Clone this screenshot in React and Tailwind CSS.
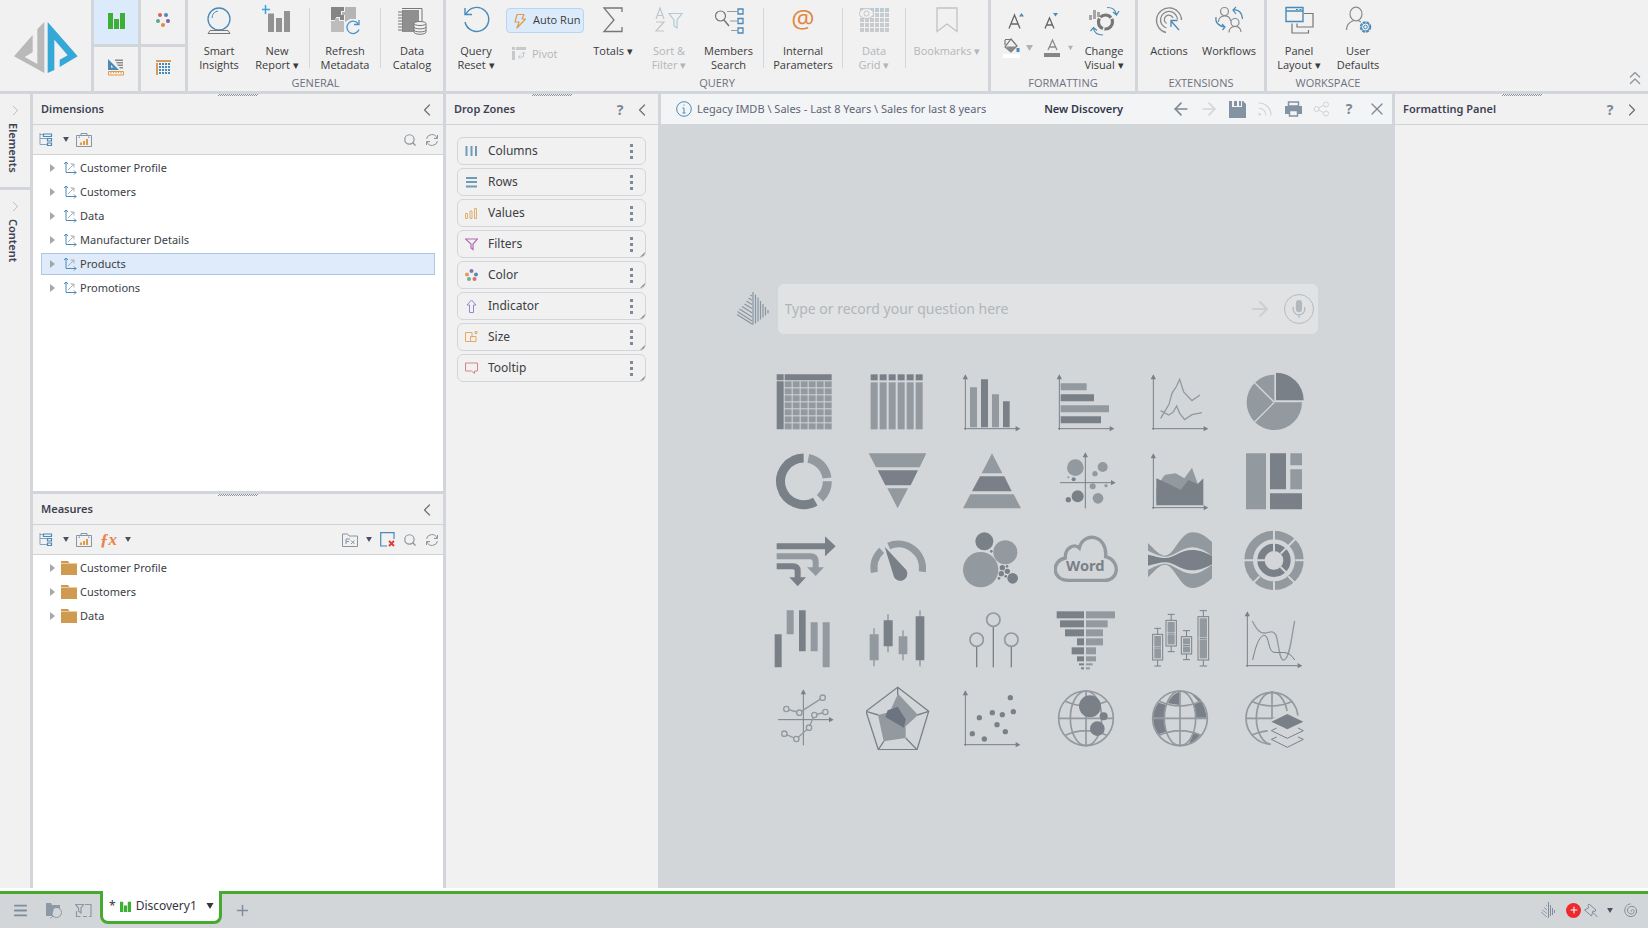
import { useState } from 'react';
import { Search, ChevronLeft, ChevronRight, ChevronsUp, X, ArrowLeft, ArrowRight, Rss, Plus, Menu, Mic } from 'lucide-react';

const DARK = '#7a8087';
const LIGHT = '#92999f';
const CANVAS = '#d2d6d9';
const BLUE = '#4a8ab8';
const ORANGE = '#e29a45';

/* ---------- Ribbon icons ---------- */

const Icon = ({ children, w = 30, h = 32, className = '' }) => (
  <svg width={w} height={h} viewBox={`0 0 ${w} ${h}`} fill="none" className={`shrink-0 ${className}`} aria-hidden="true">
    {children}
  </svg>
);

const Logo = () => (
  <svg width="64" height="54" viewBox="0 0 192 162" aria-hidden="true">
    <path fill="#b9b9b9" d="M91 9V162L0 112L56 48V100L32 114L70 135V30Z" />
    <path fill="#35a8d8" d="M101 9L191 112L137 144V122L161 109L121 62V153L101 162Z" />
  </svg>
);

const BarsIcon = ({ className = '' }) => (
  <svg width="17" height="17" viewBox="0 0 17 17" fill="#3fae36" className={className} aria-hidden="true">
    <path d="M0 1h5v16H0zM6 7h5v10H6zM12 1h5v16h-5z" />
  </svg>
);

const DotsIcon = ({ size = 14 }) => (
  <svg width={size} height={size} viewBox="0 0 14 14" aria-hidden="true">
    <circle cx="4" cy="2" r="2" fill="#d9605c" />
    <circle cx="10" cy="2" r="2" fill="#4a8ab8" />
    <circle cx="2" cy="8" r="2" fill="#4fae8c" />
    <circle cx="12" cy="8" r="2" fill="#8a5ba8" />
    <circle cx="7" cy="12" r="2" fill="#e08a42" />
  </svg>
);

const DesignIcon = () => (
  <Icon w={16} h={18}>
    <path d="M0 1l11 11H0z" fill={BLUE} />
    <path d="M3 7v2.500h2.500z" fill="#f1f1f1" />
    <path d="M7 1.500h8v1.500H7zM8 4h7v1.500H9zM9 6.500h6V8h-5zM11 9h4v1.500h-3z" fill="#8b8b8b" />
    <path d="M.5 13.500h15v3.500H.5zM3 13.500v2M5.500 13.500v1.500M8 13.500v2M10.500 13.500v1.500M13 13.500v2" stroke={ORANGE} />
  </Icon>
);

const GridIcon = () => (
  <Icon w={15} h={15}>
    <path d="M0 0h15v2H0zM0 3h2v12H0z" fill="#d69b5b" />
    {[3, 6, 9, 12].map((y) => (
      <path key={y} d={`M3 ${y}h2v2H3zM6 ${y}h2v2H6zM9 ${y}h2v2H9zM12 ${y}h2v2h-2z`} fill={BLUE} />
    ))}
  </Icon>
);

const InsightsIcon = () => (
  <Icon>
    <circle cx="15" cy="15" r="11" stroke={BLUE} strokeWidth="1.300" />
    <path d="M8 14a7.500 7.500 0 0 1 6-7" stroke={BLUE} />
    <path d="M6 26.500h18l2 3H4z" stroke="#777" />
  </Icon>
);

const NewReportIcon = () => (
  <Icon>
    <path d="M6 9.500h6V28H6zM14 14h6v14h-6zM22 7h6v21h-6z" fill="#929292" />
    <path d="M-1 5.500h9M3.500 1v9" stroke="#35a8d8" strokeWidth="1.500" />
  </Icon>
);

const RefreshMetaIcon = () => (
  <Icon>
    <path d="M1 3h13v4h-3v4h3v5h-4v-3H6v3H1z" fill="#858585" />
    <path d="M15 3h11v12h-6l-5 3v-7h-3V8h3z" fill="#b4b4b4" />
    <path d="M1 17h4v-3h4v3h5v11H1z" fill="#bdbdbd" />
    <path d="M28 19.500a6.200 6.200 0 1 0 1 6M29 16v4.500h-5" stroke="#4a93c9" strokeWidth="1.300" />
  </Icon>
);

const CatalogIcon = () => (
  <Icon>
    <path d="M5 4.500h20v14" stroke="#777" />
    <path d="M5 6h17v13h-5v9H5z" fill="#8f8f8f" />
    {[8, 11, 14, 17, 20, 23, 26].map((y) => <path key={y} d={`M1 ${y}h5`} stroke="#777" />)}
    <path d="M17 20v8c0 3 12 3 12 0v-8" fill="#f1f1f1" stroke="#777" />
    <ellipse cx="23" cy="19.500" rx="6" ry="2" fill="#f1f1f1" stroke="#777" />
    <path d="M17 23c0 2.500 12 2.500 12 0M17 26c0 2.500 12 2.500 12 0" stroke="#777" />
  </Icon>
);

const QueryResetIcon = () => (
  <Icon>
    <path d="M5 10A12 12 0 1 1 4 18M4 4v6.500h7" stroke={BLUE} strokeWidth="1.400" />
  </Icon>
);

const BoltIcon = () => (
  <Icon w={14} h={16}>
    <path d="M4 1.500h7L9 6h3.500L4 15l2-6H2z" stroke={ORANGE} strokeWidth="1.200" strokeLinejoin="round" />
  </Icon>
);

const PivotIcon = () => (
  <Icon w={14} h={14}>
    <path d="M0 0h3v3H0zM4 0h10v3H4zM0 4h3v9H0z" fill="#c6c9cb" />
    <path d="M11.500 5v5h-5M9.500 7l2-2 2 2M8.500 8l-2 2 2 2" stroke="#c6c9cb" />
  </Icon>
);

const SigmaIcon = () => (
  <Icon>
    <path d="M24 8V4H6l10 12L6 27.500h18V23" stroke="#777" strokeWidth="1.300" />
  </Icon>
);

const SortIcon = () => (
  <Icon>
    <path d="M2 15L6 4l4 11M3.500 11.500h5M2 18h8L2 27h8" stroke="#c3c6c8" strokeWidth="1.200" />
    <path d="M15 9.500h13l-5 6.500v8l-3-2v-6z" stroke="#b0cad8" strokeWidth="1.200" />
  </Icon>
);

const MembersIcon = () => (
  <Icon>
    <circle cx="6.500" cy="12" r="5" stroke="#777" strokeWidth="1.200" />
    <path d="M10 16l5 6" stroke="#777" strokeWidth="1.500" />
    <path d="M13 7.500h10M16 17h7M17 26.500h6" stroke="#999" />
    <path d="M24 5h5v5h-5zM24 14.500h5v5h-5zM24 24h5v5h-5z" stroke={BLUE} strokeWidth="1.300" />
  </Icon>
);

const DataGridIcon = () => (
  <Icon>
    {[4, 9, 14, 19, 24].map((y) => (
      <path key={y} d={`M1 ${y}h4v4H1zM6 ${y}h4v4H6zM11 ${y}h4v4h-4zM16 ${y}h4v4h-4zM21 ${y}h4v4h-4zM26 ${y}h4v4h-4z`} fill={y === 4 ? '#bccad3' : '#c8cbcd'} />
    ))}
    <ellipse cx="7.500" cy="9.500" rx="7" ry="5" fill="#f1f1f1" stroke="#c3c6c8" />
    <circle cx="7.500" cy="9.500" r="2.500" stroke="#c3c6c8" />
  </Icon>
);

const BookmarkIcon = () => (
  <Icon>
    <path d="M5 4h20v23.500L15 20 5 27.500z" stroke="#c0c3c5" strokeWidth="1.300" />
  </Icon>
);

const ChangeVisualIcon = () => (
  <Icon w={32}>
    <path d="M1 11h3v5H1zM5 6h3v9H5zM9 8h3v5H9z" fill="#a5a5a5" />
    <circle cx="17.500" cy="18" r="7" stroke="#777" strokeWidth="3.200" strokeDasharray="12 1.500" />
    <path d="M19 3.500c6 0 8 2 9.500 7M25 8l3.500 3L31 7" stroke={BLUE} strokeWidth="1.200" />
    <path d="M15 31c-6 0-9-3-9.500-7M2.500 27l3-3.500 3.500 3" stroke={BLUE} strokeWidth="1.200" />
  </Icon>
);

const ActionsIcon = () => (
  <Icon>
    <path d="M12 28.500A12.500 12.500 0 1 1 27.500 16M12.500 24A8.500 8.500 0 1 1 23.500 15.500M12.500 19.500A4.500 4.500 0 1 1 19 14" stroke="#8a8a8a" strokeWidth="1.300" />
    <path d="M25 26l-8-9M17 23v-6.500h6.500" stroke={BLUE} strokeWidth="1.300" />
  </Icon>
);

const WorkflowsIcon = () => (
  <Icon>
    <circle cx="10.500" cy="7.500" r="4" stroke="#8a8a8a" strokeWidth="1.200" />
    <path d="M4.500 18c0-8 12-8 12-1" stroke="#8a8a8a" strokeWidth="1.200" />
    <circle cx="21" cy="18.500" r="4" stroke="#8a8a8a" strokeWidth="1.200" />
    <path d="M15 28.500c0-8 12-8 12-.5" stroke="#8a8a8a" strokeWidth="1.200" />
    <path d="M19 6c5-1 9 2 9.500 9M22 3l-3 3 3 4M2 13c-1 5 2 9 9 10M8 20l3 3-2.500 3" stroke={BLUE} strokeWidth="1.200" />
  </Icon>
);

const LayoutIcon = () => (
  <Icon>
    <path d="M20 9.500h9v13.500H18M8 19.500v9.500h16.500v-3M13 19.500V23h5" stroke="#777" strokeWidth="1.200" />
    <path d="M2 3.500h17v14H2zM2 7h17" stroke={BLUE} strokeWidth="1.400" />
    <path d="M12 5.500h2M15.500 5.500h2" stroke={BLUE} />
  </Icon>
);

const UserDefaultsIcon = () => (
  <Icon>
    <ellipse cx="13" cy="10" rx="6" ry="6.800" stroke="#8a8a8a" strokeWidth="1.200" />
    <path d="M3.500 26c0-5 3-8 7-9.500M15 16.500l3 1.500" stroke="#8a8a8a" strokeWidth="1.200" />
    <circle cx="22.500" cy="23" r="5" stroke={BLUE} strokeWidth="1.500" strokeDasharray="3 1" />
    <circle cx="22.500" cy="23" r="4" stroke={BLUE} />
    <circle cx="22.500" cy="23" r="1.800" stroke={BLUE} />
  </Icon>
);

const FontSizeIcon = ({ down }) => (
  <Icon w={20} h={18}>
    {down ? (
      <path d="M3 16.500L7.500 6l4.500 10.500M4.500 13h6" stroke="#666" strokeWidth="1.300" />
    ) : (
      <path d="M2 16.500L7.500 3l5.500 13.500M4 12h7" stroke="#666" strokeWidth="1.300" />
    )}
    <path d={down ? 'M11 1h5l-2.500 3.500z' : 'M12 4.500h5L14.500 1z'} fill={BLUE} />
  </Icon>
);

const BucketIcon = () => (
  <Icon w={17} h={20}>
    <path d="M2 2v5M2 1.500h6M8 1l6 7-6 6-6-5z" stroke="#777" strokeWidth="1.200" />
    <path d="M3 8.500h10.500L8 14z" fill="#8a8a8a" />
    <path d="M15 10v4" stroke={BLUE} strokeWidth="3" />
    <path d="M0 16h17v4H0z" fill="#fff" />
  </Icon>
);

const FontColorIcon = () => (
  <Icon w={16} h={20}>
    <path d="M4 12L8.500 2 13 12M5.500 9h6" stroke="#8a8a8a" strokeWidth="1.300" />
    <path d="M0 15h16v4H0z" fill="#858585" />
  </Icon>
);

/* ---------- Ribbon ---------- */

const Tool = ({ icon, lines, className = '', disabled = false }) => (
  <button
    type="button"
    disabled={disabled}
    className={`flex flex-col items-center pt-1 text-[11px] leading-[14px] ${disabled ? 'text-[#b3b6b8]' : 'text-[#3b3b3b]'} ${className}`}
  >
    <span className="h-10">{icon}</span>
    {lines.map((l) => (
      <span key={l} className="whitespace-nowrap">{l}</span>
    ))}
  </button>
);

const Divider = () => <div className="mt-2 h-[60px] w-px bg-[#d5d8da]" />;

const Group = ({ title, children }) => (
  <section className="flex flex-col bg-[#f1f1f1]">
    <div className="flex h-[74px] items-start">{children}</div>
    <h2 className="text-center text-[11px] leading-[17px] text-[#6d7080]">{title}</h2>
  </section>
);

const Caret = ({ className = '' }) => (
  <svg width="7" height="6" viewBox="0 0 7 6" className={className} aria-hidden="true">
    <path d="M0 0h7L3.500 6z" fill="currentColor" />
  </svg>
);

const Ribbon = () => (
  <header className="flex shrink-0 gap-[3px] border-b-[3px] border-[#d2d5d9] bg-[#d2d5d9] font-['Open_Sans',sans-serif]">
    <div className="flex w-[91px] items-center justify-center bg-[#f1f1f1]">
      <Logo />
    </div>
    <nav className="grid w-[91px] grid-cols-2 grid-rows-2 gap-[3px]">
      <button type="button" aria-label="Discover" className="flex items-center justify-center bg-[#dcebfb] pb-1"><BarsIcon /></button>
      <button type="button" aria-label="Present" className="flex items-center justify-center bg-[#f1f1f1] pb-1"><DotsIcon /></button>
      <button type="button" aria-label="Model" className="flex items-center justify-center bg-[#f1f1f1] pb-1"><DesignIcon /></button>
      <button type="button" aria-label="Tabulate" className="flex items-center justify-center bg-[#f1f1f1] pb-1"><GridIcon /></button>
    </nav>

    <Group title="GENERAL">
      <Tool className="w-[62px]" icon={<InsightsIcon />} lines={['Smart', 'Insights']} />
      <Tool className="mr-[5px] w-[54px]" icon={<NewReportIcon />} lines={['New', 'Report ▾']} />
      <Divider />
      <Tool className="w-[70px]" icon={<RefreshMetaIcon />} lines={['Refresh', 'Metadata']} />
      <Divider />
      <Tool className="w-[62px]" icon={<CatalogIcon />} lines={['Data', 'Catalog']} />
    </Group>

    <Group title="QUERY">
      <Tool className="w-[60px]" icon={<QueryResetIcon />} lines={['Query', 'Reset ▾']} />
      <div className="flex w-[78px] flex-col gap-[9px] pt-2 text-[11px]">
        <button type="button" className="flex h-[25px] items-center gap-1.5 whitespace-nowrap rounded border border-[#b5d5f0] bg-[#dcebfb] pl-1.5 text-[#3b3b3b]">
          <BoltIcon />
          Auto Run
        </button>
        <button type="button" disabled className="flex h-6 items-center gap-1.5 pl-1.5 text-[#b3b6b8]">
          <PivotIcon />
          Pivot
        </button>
      </div>
      <Tool className="w-[58px]" icon={<SigmaIcon />} lines={['Totals ▾']} />
      <Tool className="w-[54px]" icon={<SortIcon />} lines={['Sort &', 'Filter ▾']} disabled />
      <Tool className="mr-0.5 w-[65px]" icon={<MembersIcon />} lines={['Members', 'Search']} />
      <Divider />
      <Tool
        className="w-[78px]"
        icon={<span className="block text-[26px] leading-[28px] text-[#e0873c]">@</span>}
        lines={['Internal', 'Parameters']}
      />
      <Divider />
      <Tool className="w-[62px]" icon={<DataGridIcon />} lines={['Data', 'Grid ▾']} disabled />
      <Divider />
      <Tool className="w-[82px]" icon={<BookmarkIcon />} lines={['Bookmarks ▾']} disabled />
    </Group>

    <Group title="FORMATTING">
      <div className="grid w-[82px] grid-cols-2 gap-y-2 pl-3 pt-3">
        <button type="button" aria-label="Increase font" className="pl-1"><FontSizeIcon /></button>
        <button type="button" aria-label="Decrease font" className="pl-1"><FontSizeIcon down /></button>
        <button type="button" aria-label="Fill color" className="flex items-center gap-1.5 text-[#b0b3b5]"><BucketIcon /><Caret /></button>
        <button type="button" aria-label="Font color" className="flex items-center gap-2 pl-1.5 text-[#b0b3b5]"><FontColorIcon /><Caret /></button>
      </div>
      <Tool className="w-[62px]" icon={<ChangeVisualIcon />} lines={['Change', 'Visual ▾']} />
    </Group>

    <Group title="EXTENSIONS">
      <Tool className="w-[62px]" icon={<ActionsIcon />} lines={['Actions']} />
      <Tool className="mr-1.5 w-[58px]" icon={<WorkflowsIcon />} lines={['Workflows']} />
    </Group>

    <div className="flex flex-1 justify-between bg-[#f1f1f1]">
      <Group title="WORKSPACE">
        <Tool className="w-[64px]" icon={<LayoutIcon />} lines={['Panel', 'Layout ▾']} />
        <Tool className="mr-1 w-[54px]" icon={<UserDefaultsIcon />} lines={['User', 'Defaults']} />
      </Group>
      <button type="button" aria-label="Collapse ribbon" className="self-end pb-0.5 pr-0.5 text-[#8f98a0]">
        <ChevronsUp size={22} strokeWidth={1.5} />
      </button>
    </div>
  </header>
);

/* ---------- Side panels ---------- */

const Grip = () => (
  <div className="absolute left-1/2 top-0 h-[2px] w-10 -translate-x-1/2 bg-[repeating-conic-gradient(#8a93a0_0_25%,#f1f1f1_0_50%)] bg-[length:2px_2px]" />
);

const PanelHeader = ({ title, children }) => (
  <div className="relative flex h-[31px] shrink-0 items-center border-b border-[#cfd3d6] bg-[#f1f1f1] pl-2 pt-px">
    <Grip />
    <h3 className="text-[11px] font-semibold text-[#3f4254]">{title}</h3>
    <div className="ml-auto flex items-center text-[#6b7580]">{children}</div>
  </div>
);

const CollapseButton = () => (
  <button type="button" aria-label="Collapse" className="pr-1.5"><ChevronLeft size={20} strokeWidth={1.5} /></button>
);

const HelpButton = () => (
  <button type="button" aria-label="Help" className="mr-0.5 w-5 text-sm font-bold text-[#7d8794]">?</button>
);

const HierarchyIcon = () => (
  <Icon w={14} h={14}>
    <path d="M1 0v11.500h7M1 5.500h7M1 1.500h3" stroke="#8aa5b8" />
    <path d="M4.500 1h8v2.500h-8zM8.500 5.500h4V8h-4zM8.500 10h4v2.500h-4z" stroke={BLUE} strokeWidth="1.200" />
  </Icon>
);

const KpiIcon = () => (
  <Icon w={16} h={14}>
    <path d="M.5 2.500h15v11H.5zM5 2.500v-2h6v2M3 5V4h1M13 5V4h-1" stroke="#8796a3" />
    <path d="M4 9.500h2V12H4zM7 8h2v4H7zM10 6h2v6h-2z" fill={ORANGE} />
  </Icon>
);

const SyncIcon = () => (
  <Icon w={14} h={14}>
    <path d="M1.500 6A5.500 5.500 0 0 1 12 5M12.500 8A5.500 5.500 0 0 1 2 9M12.500 2v3.500H9M1.500 12V8.500H5" stroke="#8b949c" />
  </Icon>
);

const FxFolderIcon = () => (
  <Icon w={16} h={14}>
    <path d="M.5 1h5l1.500 2h8.500v10.500H.5z" stroke="#8796a3" />
    <path d="M4 11V6h4M4 8.500h3M9 7.500l3.500 3.500M12.500 7.500L9 11" stroke="#8796a3" />
  </Icon>
);

const ClearIcon = () => (
  <Icon w={15} h={15}>
    <path d="M7 14H.7V.7h13.300V7" stroke={BLUE} strokeWidth="1.200" />
    <path d="M9 9l5 5M14 9l-5 5" stroke="#e23a35" strokeWidth="1.800" />
  </Icon>
);

const AxesIcon = () => (
  <Icon w={14} h={14}>
    <path d="M3 1v10.500H13M1 3l2-2 2 2M11 9.500l2 2-2 2" stroke={BLUE} />
    <path d="M5 9l6-6M7.500 3H11v3.500" stroke="#a9aeb2" />
  </Icon>
);

const FolderIcon = () => (
  <Icon w={16} h={14}>
    <path d="M0 0h7l1.500 2H0zM0 2.500h16V14H0z" fill="#d09a50" />
  </Icon>
);

const Toolbar = ({ measures }) => (
  <div className="flex h-[30px] shrink-0 items-center border-b border-[#cfd3d6] bg-[#f1f1f1] pl-1.5 pr-1 text-[#4a4f63]">
    <button type="button" aria-label="Tree view" className="flex w-[37px] items-center gap-[10px]"><HierarchyIcon /><Caret className="h-[5px] w-1.5" /></button>
    <button type="button" aria-label="KPI"><KpiIcon /></button>
    {measures && (
      <button type="button" aria-label="Add formula" className="ml-2 flex items-center gap-2">
        <span className="font-['Liberation_Serif',serif] text-[17px] font-bold italic leading-5 text-[#e8834a]">ƒx</span>
        <Caret className="h-[5px] w-1.5" />
      </button>
    )}
    <div className="ml-auto flex items-center gap-2">
      {measures && (
        <>
          <button type="button" aria-label="Formula folder" className="flex items-center gap-2"><FxFolderIcon /><Caret className="h-[5px] w-1.5" /></button>
          <button type="button" aria-label="Clear"><ClearIcon /></button>
        </>
      )}
      <button type="button" aria-label="Search"><Search size={14} strokeWidth={2} className="text-[#8b949c]" /></button>
      <button type="button" aria-label="Refresh"><SyncIcon /></button>
    </div>
  </div>
);

const Tree = ({ items, selected, onSelect, icon }) => (
  <ul className="flex-1 bg-white px-2 pt-0.5 text-[11px]">
    {items.map((item) => (
      <li key={item} className="pb-0.5">
        <button
          type="button"
          onClick={() => onSelect(item)}
          className={`flex h-[22px] w-full items-center border pl-2 text-[#3b3e44] ${selected === item ? 'border-[#a9c9e2] bg-[#dfebfa]' : 'border-transparent'}`}
        >
          <svg width="5" height="8" viewBox="0 0 5 8" aria-hidden="true"><path d="M0 0l5 4-5 4z" fill="#a3a7aa" /></svg>
          <span className="ml-1.5 mr-[3px] flex w-4 justify-end">{icon}</span>
          {item}
        </button>
      </li>
    ))}
  </ul>
);

const RailTab = ({ label, className = '' }) => (
  <button type="button" className={`flex flex-col items-center bg-[#f1f1f1] pt-2 text-[11px] font-semibold text-[#3f4254] ${className}`}>
    <ChevronRight size={17} strokeWidth={1} className="text-[#a0a6ab]" />
    <span className="mt-1 pr-1 leading-4 [writing-mode:vertical-rl]">{label}</span>
  </button>
);

/* ---------- Drop zones ---------- */

const zones = [
  { name: 'Columns', icon: <path d="M1.500 1v10M6.500 1v10M11 1v10" stroke="#6f9ab8" strokeWidth="2" /> },
  { name: 'Rows', icon: <path d="M1 2h11M1 6h11M1 10.500h11" stroke="#6f9ab8" strokeWidth="2" /> },
  { name: 'Values', icon: <path d="M.5 6.500h2v5h-2zM5 4h2v7.500H5zM9.500 1.500h2v10h-2z" stroke="#e0b06a" /> },
  { name: 'Filters', icon: <path d="M.5 1h12L8 6v5.500l-2-1.500V6z" stroke="#b06cb5" strokeWidth="1.200" />, more: true },
  {
    name: 'Color',
    icon: (
      <>
        <circle cx="6.500" cy="2" r="2" fill="#8a6fae" />
        <circle cx="2" cy="5.500" r="2" fill="#e09a62" />
        <circle cx="11" cy="5.500" r="2" fill="#5b86b5" />
        <circle cx="4" cy="10" r="2" fill="#6fae9a" />
        <circle cx="9.500" cy="10" r="2" fill="#d9706c" />
      </>
    ),
    more: true,
  },
  { name: 'Indicator', icon: <path d="M6.500 0L11 5H8.500v7.500h-4V5H2z" stroke="#9a86cc" />, more: true },
  { name: 'Size', icon: <path d="M7 10.500H.5v-9H7v5M5.500 5.500H11v5H5.500zM10 .5h2v2h-2z" stroke="#e5a868" />, more: true },
  { name: 'Tooltip', icon: <path d="M.5 1h12v8H9.500v2.500L6.500 9h-6z" stroke="#d6848a" />, more: true },
];

const DropZone = ({ name, icon, more }) => (
  <button type="button" className="relative flex h-7 w-full items-center overflow-hidden rounded-md border border-[#d2d5d9] pl-[7px] pr-3 text-xs text-[#3b3e44]">
    <Icon w={13} h={13}>{icon}</Icon>
    <span className="ml-[10px]">{name}</span>
    <svg width="3" height="15" viewBox="0 0 3 15" fill="#7f8a96" className="ml-auto" aria-hidden="true">
      <path d="M0 0h3v3H0zM0 6h3v3H0zM0 12h3v3H0z" />
    </svg>
    {more && (
      <svg width="5" height="5" viewBox="0 0 5 5" className="absolute bottom-0 right-0" aria-hidden="true">
        <path d="M5 0v5H0z" fill="#858c93" />
      </svg>
    )}
  </button>
);

/* ---------- Chart gallery ---------- */

// chart drawings use a 192 unit box
const Axis = () => (
  <g fill={DARK}>
    <path d="M16 24V180M12 176H170" stroke={DARK} strokeWidth="3" fill="none" />
    <path d="M8 28L16 13L24 28ZM167 168L181 176L167 184Z" />
  </g>
);

const CrossAxis = () => (
  <g fill={DARK}>
    <path d="M94 18V178M18 101H176" stroke={DARK} strokeWidth="3" fill="none" />
    <path d="M86 25L94 10L102 25ZM171 93L185 101L171 109Z" />
  </g>
);

const Circles = ({ data, ...rest }) => data.map(([x, y, r]) => <circle key={`${x}-${y}`} cx={x} cy={y} r={r} {...rest} />);

const Globe = ({ cx = 96, r = 82 }) => (
  <g fill="none" stroke={LIGHT} strokeWidth="5">
    <circle cx={cx} cy="97" r={r} />
    <ellipse cx={cx} cy="97" rx="47" ry={r} />
    <path d={`M${cx} 15V179M${cx - r} 97H${cx + r}M${cx - 62} 46Q${cx} 74 ${cx + 62} 46M${cx - 62} 148Q${cx} 120 ${cx + 62} 148`} />
  </g>
);

const boxPlots = [
  [14, 82, 30, 77, 64, 177],
  [54, 40, 31, 77, 22, 134],
  [100, 89, 31, 52, 71, 158],
  [150, 29, 32, 130, 11, 177],
];

const tornado = [
  [13, 21, 8, 183],
  [40, 21, 18, 161],
  [67, 21, 33, 147],
  [94, 21, 69, 147],
  [121, 21, 53, 126],
  [148, 15, 69, 126],
  [169, 6, 75, 116],
  [181, 6, 81, 108],
];

const six = [0, 1, 2, 3, 4, 5];

const charts = [
  { name: 'Matrix', art: (
    <>
      <path fill={DARK} d="M14 13H35V31H14ZM38 13H179V31H38ZM14 34H35V178H14Z" />
      {six.map((c) => [...six, 6].map((r) => (
        <rect key={`${c}${r}`} x={38 + c * 24} y={34 + r * 21} width="21" height="18" fill={LIGHT} />
      )))}
    </>
  ) },
  { name: 'Table', art: six.map((c) => (
    <g key={c}>
      <rect x={14 + c * 27} y="13" width="21" height="18" fill={DARK} />
      <rect x={14 + c * 27} y="37" width="21" height="141" fill={LIGHT} />
    </g>
  )) },
  { name: 'Column', art: (
    <>
      <Axis />
      <path fill={LIGHT} d="M30 52H51V172H30ZM96 73H117V172H96Z" />
      <path fill={DARK} d="M63 28H84V172H63ZM129 94H149V172H129Z" />
    </>
  ) },
  { name: 'Bar', art: (
    <>
      <Axis />
      <path fill={LIGHT} d="M20 40H98V61H20ZM20 106H165V127H20Z" />
      <path fill={DARK} d="M20 73H120V94H20ZM20 139H141V160H20Z" />
    </>
  ) },
  { name: 'Line', art: (
    <>
      <Axis />
      <path fill="none" stroke={LIGHT} strokeWidth="4" d="M38 145L63 103L72 70L86 48L95 28L107 66L132 92L156 75M38 122L62 135L75 127L86 108L95 130L110 149L132 134L162 128" />
    </>
  ) },
  { name: 'Pie', art: (
    <>
      <path fill={LIGHT} d="M97 14A83 83 0 1 0 180 97H97Z" />
      <path fill={DARK} d="M102 8A83 83 0 0 1 185 91H102Z" />
      <path stroke={CANVAS} strokeWidth="4" d="M97 97L38 38M97 97L38 156" />
    </>
  ) },
  { name: 'Doughnut', art: (
    <g fill="none" strokeWidth="27">
      <path stroke={DARK} d="M95 27A70 70 0 1 0 130 158" />
      <path stroke={LIGHT} d="M109 28A70 70 0 0 1 165 87M166 97A70 70 0 0 1 144 148" />
    </g>
  ) },
  { name: 'Funnel', art: (
    <>
      <path fill={LIGHT} d="M8 13H181L161 55H30ZM64 118H126L95 178Z" />
      <path fill={DARK} d="M35 64H156L134 109H58Z" />
    </>
  ) },
  { name: 'Pyramid', art: (
    <>
      <path fill={LIGHT} d="M96 13L127 73H65ZM31 136H161L183 178H9Z" />
      <path fill={DARK} d="M60 82H133L155 127H36Z" />
    </>
  ) },
  { name: 'Bubble', art: (
    <>
      <CrossAxis />
      <Circles fill={LIGHT} data={[[64, 56, 25], [146, 54, 15], [123, 74, 8], [43, 85, 3], [116, 112, 9], [156, 110, 5], [132, 148, 16]]} />
      <Circles fill={DARK} data={[[59, 91, 6], [71, 142, 18], [43, 152, 8]]} />
    </>
  ) },
  { name: 'Area', art: (
    <>
      <Axis />
      <path fill={LIGHT} d="M25 119L45 84L52 77L83 73L109 88L132 56L149 104V160H25Z" />
      <path fill={DARK} d="M25 88L63 105L98 123L121 93L149 105L166 88V169H25Z" />
    </>
  ) },
  { name: 'Treemap', art: (
    <>
      <path fill={LIGHT} d="M12 13H72V181H12ZM145 13H180V49H145ZM145 61H180V121H145Z" />
      <path fill={DARK} d="M84 13H132V121H84ZM84 133H180V181H84Z" />
    </>
  ) },
  { name: 'Sankey', art: (
    <>
      <path fill="none" stroke={LIGHT} strokeWidth="18" d="M14 85H115Q131 85 131 101V120" />
      <path fill={LIGHT} d="M105 118H156L131 144Z" />
      <path fill="none" stroke={DARK} strokeWidth="18" d="M14 55H162M14 115H63Q77 115 77 129V150" />
      <path fill={DARK} d="M159 25L191 55L159 85ZM52 148H102L77 175Z" />
    </>
  ) },
  { name: 'Gauge', art: (
    <>
      <path fill="none" stroke={LIGHT} strokeWidth="21" d="M25 133A73 73 0 0 1 47 67M68 54A73 73 0 0 1 169 131" />
      <path fill={DARK} d="M56 56L121 126A20 20 0 0 1 84 147Z" />
      <circle cx="103" cy="138" r="20" fill={DARK} />
    </>
  ) },
  { name: 'Packed bubbles', art: (
    <>
      <Circles fill={LIGHT} data={[[136, 73, 36], [62, 125, 53]]} />
      <Circles fill={DARK} data={[[73, 40, 27], [94, 70, 4], [127, 119, 8], [141, 115, 4], [124, 137, 8], [142, 130, 8], [117, 151, 4], [137, 145, 4], [158, 151, 16]]} />
    </>
  ) },
  { name: 'Word cloud', art: (
    <>
      <path fill="none" stroke={LIGHT} strokeWidth="10" d="M44 157C-8 157 -8 98 34 90C32 58 62 46 76 60C88 10 160 18 155 86C200 98 196 157 152 157Z" />
      <text x="94" y="129" textAnchor="middle" fontSize="44" fontWeight="700" fill={DARK}>Word</text>
    </>
  ) },
  { name: 'Stream', art: (
    <>
      <path fill={LIGHT} d="M0 45C20 65 35 83 51 83C80 83 95 13 133 13C160 13 175 28 192 42V84C170 66 150 58 133 58C100 58 75 88 51 86C35 84 20 78 0 68Z" />
      <path fill={LIGHT} d="M0 148C20 128 35 110 51 110C80 110 95 180 133 180C160 180 175 165 192 151V110C170 127 150 137 133 137C100 137 75 107 51 107C35 108 20 116 0 125Z" />
      <path fill={DARK} d="M0 80C20 84 35 90 51 90C80 90 95 66 133 66C155 66 175 74 192 84V109C175 119 155 127 133 127C95 127 80 103 51 103C35 103 20 109 0 113Z" />
    </>
  ) },
  { name: 'Sunburst', art: (
    <>
      <circle cx="96" cy="97" r="76" fill="none" stroke={LIGHT} strokeWidth="26" />
      <circle cx="96" cy="97" r="39" fill="none" stroke={DARK} strokeWidth="22" />
      <path stroke={CANVAS} strokeWidth="6" d="M96 0V69M96 160V192M0 97H69M160 97H192M116 77L134 59M139 54L166 27M116 117L134 135M139 145L166 172M53 145L26 172" />
    </>
  ) },
  { name: 'Waterfall', art: (
    <>
      <path fill={DARK} d="M8 82H29V181H8ZM81 10H101V133H81Z" />
      <path fill={LIGHT} d="M44 10H65V82H44ZM116 46H137V133H116ZM152 46H173V181H152Z" />
    </>
  ) },
  { name: 'Candlestick', art: (
    <>
      <path stroke={DARK} strokeWidth="3" d="M24 64V178M66 22V136M111 70V160M162 10V178" />
      <path fill={LIGHT} d="M11 82H38V160H11ZM98 88H124V142H98Z" />
      <path fill={DARK} d="M53 40H80V118H53ZM149 28H175V160H149Z" />
    </>
  ) },
  { name: 'Lollipop', art: (
    <>
      <path stroke={DARK} strokeWidth="4" d="M100 58V181M50 118V181M154 118V181" />
      <Circles fill="none" stroke={LIGHT} strokeWidth="5" data={[[100, 38, 20], [50, 98, 20], [154, 98, 20]]} />
    </>
  ) },
  { name: 'Tornado', art: tornado.map(([y, h, left, right]) => (
    <g key={y}>
      <rect x={left} y={y} width={90 - left} height={h} fill={DARK} />
      <rect x="96" y={y} width={right - 96} height={h} fill={LIGHT} />
    </g>
  )) },
  { name: 'Box plot', art: boxPlots.map(([x, y, w, h, top, bottom]) => (
    <g key={x} fill="none" stroke={DARK} strokeWidth="3">
      <path d={`M${x + w / 2} ${top}V${y}M${x + w / 2} ${y + h}V${bottom}M${x + 5} ${top}H${x + w - 5}M${x + 5} ${bottom}H${x + w - 5}`} />
      <rect x={x} y={y} width={w} height={h} />
      <rect x={x + 5} y={y + 5} width={w - 10} height={h - 10} fill={LIGHT} stroke="none" />
      <path d={`M${x + 2} ${y + h / 2}H${x + w - 2}`} stroke={CANVAS} strokeWidth="7" />
      <path d={`M${x + 5} ${y + h / 2}H${x + w - 5}`} />
    </g>
  )) },
  { name: 'Spline', art: (
    <>
      <Axis />
      <path fill="none" stroke={LIGHT} strokeWidth="4" d="M31 42C40 60 50 79 68 78C82 77 92 68 101 83C110 100 110 159 125 159C143 159 150 80 158 42" />
      <path fill="none" stroke={DARK} strokeWidth="3" d="M32 159C42 110 55 85 67 85C82 85 78 135 96 136C120 139 140 128 158 159" />
    </>
  ) },
  { name: 'Quadrant line', art: (
    <>
      <CrossAxis />
      <path fill="none" stroke={LIGHT} strokeWidth="4" d="M43 69L82 80L152 35M37 143L73 159L111 125L127 87L160 78" />
      <Circles fill={CANVAS} stroke={LIGHT} strokeWidth="4" data={[[43, 69, 8], [82, 80, 8], [152, 35, 8], [37, 143, 8], [73, 159, 8], [111, 125, 8], [127, 87, 8], [160, 78, 8]]} />
    </>
  ) },
  { name: 'Radar', art: (
    <>
      <path fill={LIGHT} d="M96 23L156 87L119 121V156L53 166L36 87L71 78Z" />
      <path fill="#6b7480" d="M65 73L95 62L119 100L114 125L58 93Z" />
      <path fill="none" stroke={DARK} strokeWidth="4" d="M95 4L188 76L153 191H37L0 76ZM95 4V26M188 76L154 87M153 191L119 156M37 191L54 165M0 76L37 87" />
    </>
  ) },
  { name: 'Scatter', art: (
    <>
      <Axis />
      <Circles fill={DARK} data={[[151, 35, 8], [160, 77, 8], [127, 86, 8], [97, 80, 8], [58, 95, 8], [111, 116, 8], [136, 137, 8], [37, 143, 8], [73, 159, 8]]} />
    </>
  ) },
  { name: 'Map bubbles', art: (
    <>
      <Globe />
      <Circles fill={DARK} data={[[108, 61, 33], [149, 91, 12], [130, 128, 22]]} />
    </>
  ) },
  { name: 'Filled map', art: (
    <>
      <path fill={DARK} d="M94 17V57L60 52Q68 27 94 17ZM32 50L55 57Q48 75 49 95H15Q16 70 32 50ZM128 22Q170 42 176 95H143Q142 72 135 56L154 49ZM49 99Q49 120 55 137L32 145Q16 124 15 99ZM135 137L157 145Q146 164 122 174Q133 155 135 137Z" />
      <Globe />
    </>
  ) },
  { name: 'Layered map', art: (
    <>
      <Globe cx={90} r={78} />
      <path fill={CANVAS} d="M136 74L192 100V192H90L76 130V107Z" />
      <path fill={DARK} d="M136 84L184 107L136 130L88 107Z" />
      <path fill="none" stroke={DARK} strokeWidth="3" d="M104 126L88 134L136 157L184 134L168 126M104 153L88 160L136 184L184 160L168 153" />
    </>
  ) },
];

const PyramidIcon = ({ size = 34 }) => (
  <svg width={size} height={size} viewBox="0 0 34 34" fill="none" stroke="#8a95a3" strokeWidth="1.200" aria-hidden="true">
    <path d="M17 0V33M19.500 2.500V31.500M22 5.500V29.500M24.500 9V27.500M27 12V25.500M29.500 15V23.500M32 18V21.500" />
    <path d="M14.500 3l1.500 1M12.500 6l3.500 2.300M10.500 9l5.500 3.600M8.500 12l7.500 4.600M6 14.500l10 6.300M3.500 17l12.500 8M1.500 19.500l14.500 9.500M1 22.500l15 9.500" />
  </svg>
);

// thinned out for small sizes
const SmallPyramidIcon = () => (
  <svg width="16" height="17" viewBox="0 0 16 17" fill="none" stroke="#7f8d9b" aria-hidden="true">
    <path d="M8.500 0v16M10.500 3v11M12.500 6v7M14.500 8v3" />
    <path d="M6 3l1 1M4 5.500l3 2.500M2.500 8L7 11.500M1 10l6 5" strokeWidth=".8" />
  </svg>
);

const SaveIcon = () => (
  <Icon w={17} h={17}>
    <path d="M0 0h3v6h10V0h1l3 3v14H0zM5 0h3v5H5zM10 0h2v5h-2z" fill="#8393a3" />
  </Icon>
);

const PrintIcon = () => (
  <Icon w={17} h={16}>
    <path d="M0 5h17v8H0z" fill="#8393a3" />
    <path d="M3.500 1h10v4h-10zM4.500 9.500h8V15h-8z" fill="#f3f4f5" stroke="#8393a3" strokeWidth="1.500" />
  </Icon>
);

const ShareIcon = () => (
  <Icon w={17} h={16}>
    <path d="M6 7l5-3M6 9l5 3" stroke="#cfd3d6" />
    <circle cx="3.500" cy="8" r="2.500" stroke="#cfd3d6" />
    <circle cx="13" cy="3.500" r="2.500" stroke="#cfd3d6" />
    <circle cx="13" cy="12.500" r="2.500" stroke="#cfd3d6" />
  </Icon>
);

const HeaderButton = ({ label, children }) => (
  <button type="button" aria-label={label} className="flex w-7 items-center justify-center">{children}</button>
);

const Canvas = () => (
  <main className="flex min-w-0 flex-1 flex-col bg-[#d2d6d9]">
    <div className="flex h-[31px] shrink-0 items-center border-b border-[#d2d6d9] bg-[#f3f4f5] pl-[15px] pr-px text-[#7d8794]">
      <svg width="16" height="16" viewBox="0 0 16 16" fill="none" stroke={BLUE} className="shrink-0" aria-hidden="true">
        <circle cx="8" cy="8" r="7.300" />
        <path d="M8 7v5M6.500 7H8M6.500 12h3M7.500 4h1" />
      </svg>
      <span className="ml-[5px] whitespace-nowrap text-[11px] text-[#5f6678]">Legacy IMDB \ Sales - Last 8 Years \ Sales for last 8 years</span>
      <h1 className="ml-auto mr-11 whitespace-nowrap pt-px text-[11px] font-semibold text-[#34374a]">New Discovery</h1>
      <div className="flex">
        <HeaderButton label="Back"><ArrowLeft size={20} strokeWidth={2} /></HeaderButton>
        <HeaderButton label="Forward"><ArrowRight size={20} strokeWidth={2} className="text-[#d3d6d9]" /></HeaderButton>
        <HeaderButton label="Save"><SaveIcon /></HeaderButton>
        <HeaderButton label="Subscribe"><Rss size={18} strokeWidth={1.5} className="text-[#d0d4d7]" /></HeaderButton>
        <HeaderButton label="Print"><PrintIcon /></HeaderButton>
        <HeaderButton label="Share"><ShareIcon /></HeaderButton>
        <HeaderButton label="Help"><span className="text-sm font-bold">?</span></HeaderButton>
        <HeaderButton label="Close"><X size={20} strokeWidth={1.5} /></HeaderButton>
      </div>
    </div>

    <div className="mx-auto flex w-[582px] max-w-full flex-col gap-7 pt-[159px]">
      <div className="flex items-center gap-2">
        <PyramidIcon />
        <label className="flex h-[50px] flex-1 items-center gap-3 rounded-md bg-[#e0e2e4] pl-[7px] pr-1">
          <input
            type="text"
            aria-label="Question"
            placeholder="Type or record your question here"
            className="min-w-0 flex-1 bg-transparent text-sm outline-none placeholder:text-[#b2b6b9]"
          />
          <button type="button" aria-label="Ask" className="text-[#cdd0d3]"><ArrowRight size={24} strokeWidth={2} /></button>
          <button type="button" aria-label="Record" className="flex size-[30px] items-center justify-center rounded-full border border-[#b5bbc0] text-[#b2b8bd]">
            <Mic size={20} strokeWidth={1.5} className="[&>rect]:fill-current" />
          </button>
        </label>
      </div>
      <div className="-mr-[3px] grid grid-cols-6 pl-[21px]">
        {charts.map((c) => (
          <button key={c.name} type="button" aria-label={c.name} className="flex h-[79px] items-center justify-center">
            <svg width="64" height="64" viewBox="0 0 192 192" aria-hidden="true">{c.art}</svg>
          </button>
        ))}
      </div>
    </div>
  </main>
);

/* ---------- Footer ---------- */

const Footer = () => (
  <footer className="flex h-[37px] shrink-0 border-t-[3px] border-[#45ab2d] bg-[#d2d6d9] text-[#7f8d9b]">
    <div className="flex w-[100px] items-center gap-4 pb-0.5 pl-3">
      <button type="button" aria-label="Menu"><Menu size={17} strokeWidth={2.5} /></button>
      <button type="button" aria-label="Find content">
        <Icon w={18} h={17}>
          <path d="M1 1h5l1 2h8v3H9l-2 8H1z" fill="#8b99a6" />
          <circle cx="11.500" cy="10.500" r="5" stroke="#8b99a6" />
          <path d="M8 14l-2.500 2.500" stroke="#8b99a6" />
        </Icon>
      </button>
      <button type="button" aria-label="Filter tree" className="-ml-1">
        <Icon w={17} h={15}>
          <path d="M.5 1.500h8L6 5v5L3.500 8V5zM1.500 8v5.500h4M10 1.500h6v12h-2M8 13.500h4" stroke="#8b99a6" strokeWidth="1.200" />
        </Icon>
      </button>
    </div>
    <div className="-mt-[3px] mb-1 flex items-center rounded-b-lg border-x-[3px] border-b-[3px] border-[#45ab2d] bg-white pl-1.5 pr-1 text-xs text-[#33363c]">
      <span className="mr-1">*</span>
      <BarsIcon className="mr-[5px] h-[11px] w-[11px]" />
      <button type="button" className="flex items-center gap-2">
        Discovery1
        <Caret className="w-[10px]" />
      </button>
    </div>
    <button type="button" aria-label="New tab" className="ml-3 pb-0.5"><Plus size={17} strokeWidth={2} /></button>
    <div className="ml-auto flex items-center pb-0.5 pr-[9px]">
      <SmallPyramidIcon />
      <button type="button" aria-label="Notifications" className="ml-[10px] flex size-[15px] items-center justify-center rounded-full bg-[#ee2a30] text-white">
        <Plus size={10} strokeWidth={2.5} />
      </button>
      <button type="button" aria-label="Pin" className="ml-0.5">
        <Icon w={15} h={15}>
          <path d="M6 1l7 6-1 1.500-2-.5-1.500 5L1.500 7l4-2L5 2.500zM10 9.500l4.500 4.500" stroke="#7f8d9b" />
        </Icon>
      </button>
      <Caret className="ml-[9px] h-[5px] w-1.5 text-[#4a4f63]" />
      <svg width="15" height="15" viewBox="0 0 15 15" fill="none" stroke="#7f8d9b" className="ml-[11px]" aria-hidden="true">
        <path d="M7.500 8.500c-1-1 .5-2.500 2-1.500s.5 4-2 4-4.500-2-4-4.500S7 3 9 3.500s4 2.500 3.500 5.500-3.500 5-6.500 4.500S.500 10.500.800 7 3.500 1 6.500 1" />
      </svg>
    </div>
  </footer>
);

const App = () => {
  const [selected, setSelected] = useState('Products');

  return (
    <div className="flex h-screen flex-col bg-white font-['Noto_Sans','Open_Sans',sans-serif]">
      <Ribbon />
      <div className="mb-[3px] flex min-h-0 flex-1 gap-[3px] bg-[#d2d5d9]">
        <aside className="flex w-[30px] shrink-0 flex-col gap-[3px]">
          <RailTab label="Elements" className="h-[93px]" />
          <RailTab label="Content" className="flex-1" />
        </aside>

        <div className="flex w-[410px] shrink-0 flex-col gap-[3px]">
          <section className="flex h-1/2 shrink-0 flex-col">
            <PanelHeader title="Dimensions">
              <CollapseButton />
            </PanelHeader>
            <Toolbar />
            <Tree
              items={['Customer Profile', 'Customers', 'Data', 'Manufacturer Details', 'Products', 'Promotions']}
              selected={selected}
              onSelect={setSelected}
              icon={<AxesIcon />}
            />
          </section>
          <section className="flex flex-1 flex-col">
            <PanelHeader title="Measures">
              <CollapseButton />
            </PanelHeader>
            <Toolbar measures />
            <Tree items={['Customer Profile', 'Customers', 'Data']} onSelect={() => {}} icon={<FolderIcon />} />
          </section>
        </div>

        <section className="flex w-[212px] shrink-0 flex-col bg-[#f1f1f1]">
          <PanelHeader title="Drop Zones">
            <HelpButton />
            <CollapseButton />
          </PanelHeader>
          <div className="flex flex-col gap-[3px] px-3 pl-[11px] pt-3">
            {zones.map((z) => <DropZone key={z.name} {...z} />)}
          </div>
        </section>

        <Canvas />

        <section className="w-[253px] shrink-0 bg-[#f1f1f1]">
          <PanelHeader title="Formatting Panel">
            <HelpButton />
            <button type="button" aria-label="Expand" className="pr-1.5"><ChevronRight size={20} strokeWidth={1.5} /></button>
          </PanelHeader>
        </section>
      </div>
      <Footer />
    </div>
  );
};

export default App;
